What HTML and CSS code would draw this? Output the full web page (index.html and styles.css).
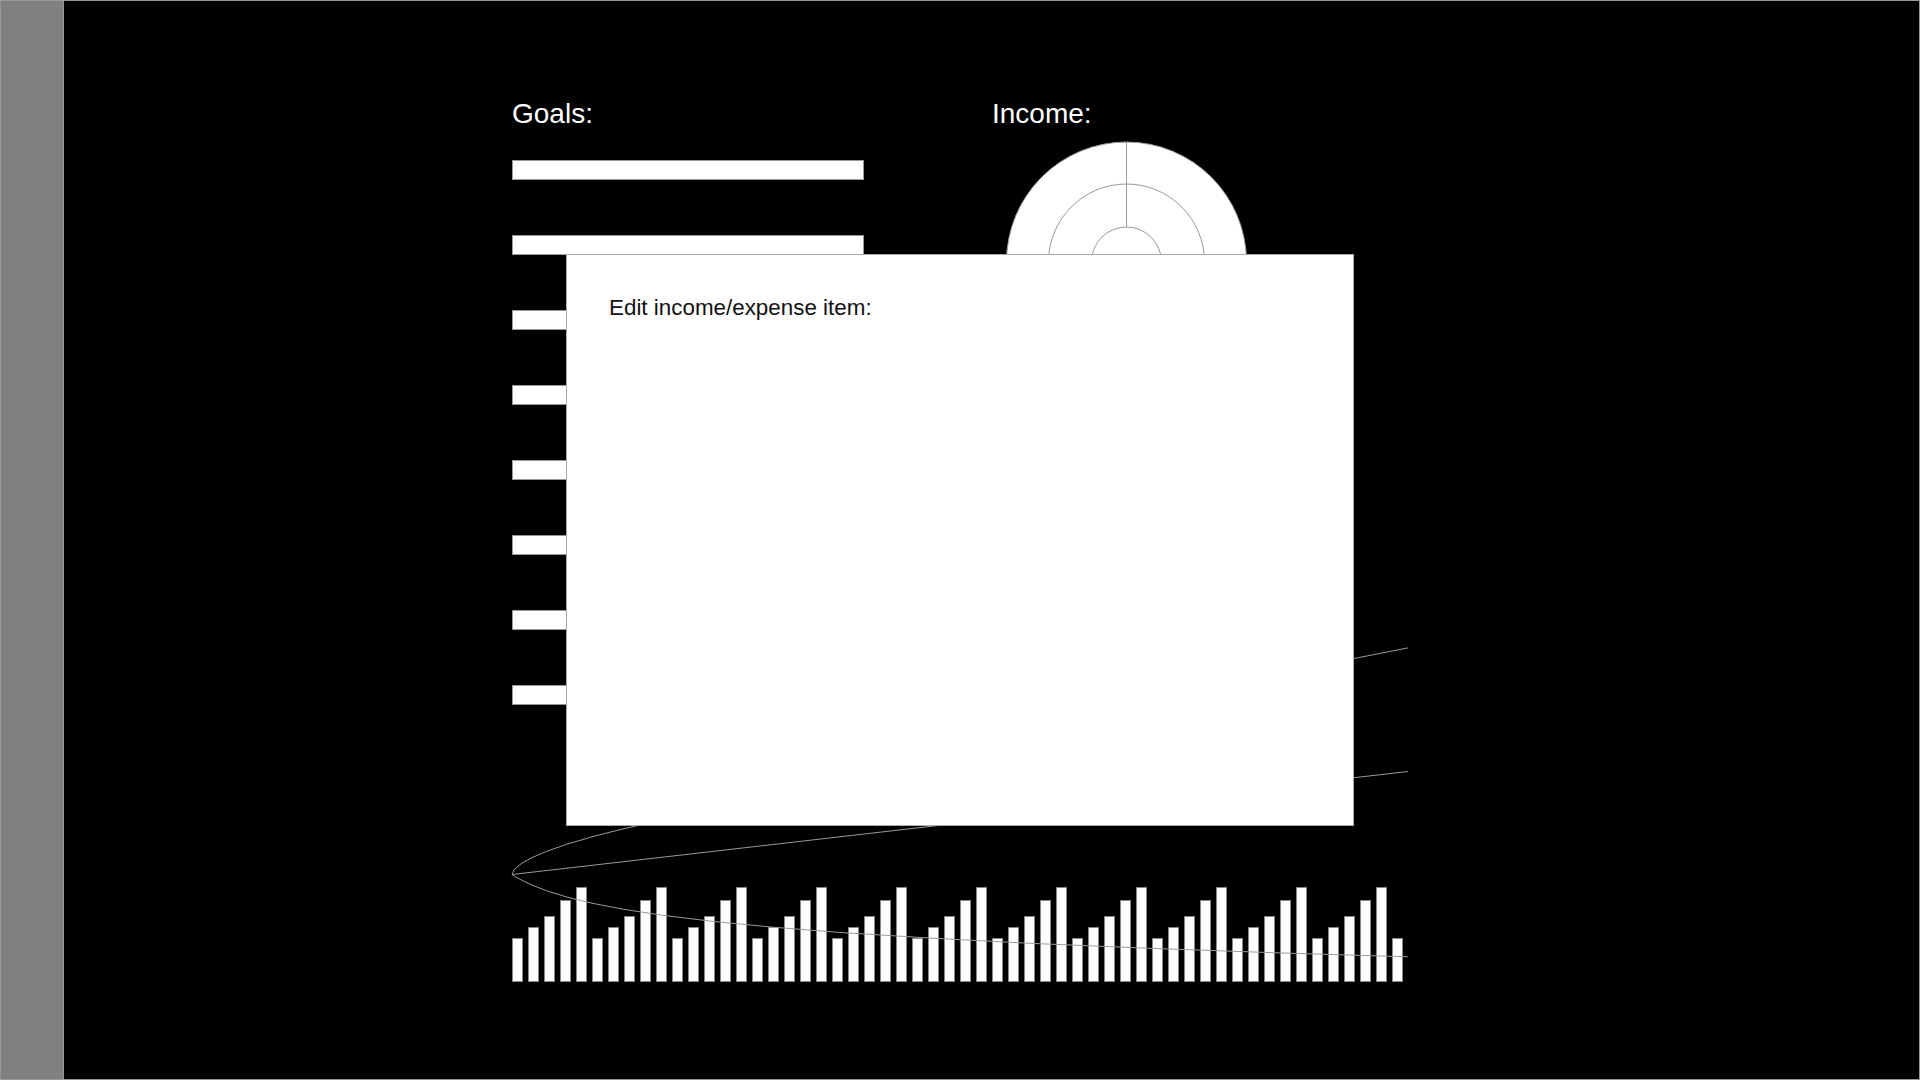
FILE: index.html
```html
<!DOCTYPE html>
<html lang="en">
<head>
<meta charset="utf-8">
<title>Budget</title>
<link rel="stylesheet" href="styles.css">
</head>
<body>
<div class="app">
  <aside class="sidebar"></aside>
  <main class="main">
    <div class="content">
      <div class="top-row">
        <section class="goals">
          <h2 class="section-title">Goals:</h2>
          <ul class="goal-list">
            <li class="goal-bar"></li>
            <li class="goal-bar"></li>
            <li class="goal-bar"></li>
            <li class="goal-bar"></li>
            <li class="goal-bar"></li>
            <li class="goal-bar"></li>
            <li class="goal-bar"></li>
            <li class="goal-bar"></li>
          </ul>
        </section>
        <section class="income">
          <h2 class="section-title">Income:</h2>
          <svg class="income-chart" viewBox="0 0 274 264" width="274" height="264">
            <circle cx="134.5" cy="131" r="120" class="ring"/>
            <circle cx="134.5" cy="131" r="78" class="ring"/>
            <circle cx="134.5" cy="131" r="35" class="ring"/>
            <line x1="134.5" y1="11" x2="134.5" y2="96" class="ring-line"/>
          </svg>
        </section>
      </div>
      <div class="charts">
        <div class="bar-chart">
          <div class="bar" style="height:44px"></div><div class="bar" style="height:55px"></div><div class="bar" style="height:66px"></div><div class="bar" style="height:82px"></div><div class="bar" style="height:95px"></div>
          <div class="bar" style="height:44px"></div><div class="bar" style="height:55px"></div><div class="bar" style="height:66px"></div><div class="bar" style="height:82px"></div><div class="bar" style="height:95px"></div>
          <div class="bar" style="height:44px"></div><div class="bar" style="height:55px"></div><div class="bar" style="height:66px"></div><div class="bar" style="height:82px"></div><div class="bar" style="height:95px"></div>
          <div class="bar" style="height:44px"></div><div class="bar" style="height:55px"></div><div class="bar" style="height:66px"></div><div class="bar" style="height:82px"></div><div class="bar" style="height:95px"></div>
          <div class="bar" style="height:44px"></div><div class="bar" style="height:55px"></div><div class="bar" style="height:66px"></div><div class="bar" style="height:82px"></div><div class="bar" style="height:95px"></div>
          <div class="bar" style="height:44px"></div><div class="bar" style="height:55px"></div><div class="bar" style="height:66px"></div><div class="bar" style="height:82px"></div><div class="bar" style="height:95px"></div>
          <div class="bar" style="height:44px"></div><div class="bar" style="height:55px"></div><div class="bar" style="height:66px"></div><div class="bar" style="height:82px"></div><div class="bar" style="height:95px"></div>
          <div class="bar" style="height:44px"></div><div class="bar" style="height:55px"></div><div class="bar" style="height:66px"></div><div class="bar" style="height:82px"></div><div class="bar" style="height:95px"></div>
          <div class="bar" style="height:44px"></div><div class="bar" style="height:55px"></div><div class="bar" style="height:66px"></div><div class="bar" style="height:82px"></div><div class="bar" style="height:95px"></div>
          <div class="bar" style="height:44px"></div><div class="bar" style="height:55px"></div><div class="bar" style="height:66px"></div><div class="bar" style="height:82px"></div><div class="bar" style="height:95px"></div>
          <div class="bar" style="height:44px"></div><div class="bar" style="height:55px"></div><div class="bar" style="height:66px"></div><div class="bar" style="height:82px"></div><div class="bar" style="height:95px"></div>
          <div class="bar" style="height:44px"></div>
        </div>
        <svg class="line-chart" viewBox="0 0 898 277" width="898" height="277">
          <polyline class="series" points="0,169.5 2,165.05 5,161.93 10,158.2 20,152.6 35,146.2 55,139.2 80,131.8 105,125.4 130,119.6 300,69.5 500,19.5 700,-15.5 842,-46.5 896,-57.1"/>
          <line class="series" x1="0" y1="169.5" x2="896" y2="66.5"/>
          <polyline class="series" points="0,169.5 5,172.57 10,175.32 20,180.08 35,185.9 55,192.1 80,198.2 110,204 150,210.2 200,216.3 260,222.1 330,227.6 420,233.2 520,238.4 640,243.4 770,248 896,251.8"/>
        </svg>
      </div>
    </div>
  </main>
</div>
<div class="modal">
  <h3 class="modal-title">Edit income/expense item:</h3>
</div>
</body>
</html>
```
FILE: styles.css
```css
html, body {
  margin: 0;
  padding: 0;
  background: #000;
}

body {
  font-family: "Liberation Sans", Arial, sans-serif;
  overflow: hidden;
}

.app {
  display: flex;
  height: 100vh;
  box-sizing: border-box;
  border: 1px solid #999;
}

.sidebar {
  width: 62px;
  flex: none;
  background: #808080;
  border-right: 1px solid #9a9a9a;
}

.main {
  flex: 1;
  background: #000;
  padding-top: 97px;
  padding-left: 448px;
}

.content {
  width: 898px;
}

.top-row {
  display: flex;
  gap: 128px;
  align-items: flex-start;
}

.goals {
  width: 352px;
  flex: none;
}

.section-title {
  margin: 0;
  font-size: 28px;
  line-height: 32px;
  font-weight: normal;
  color: #fff;
}

.goal-list {
  list-style: none;
  margin: 30px 0 0;
  padding: 0;
  display: flex;
  flex-direction: column;
  gap: 55px;
}

.goal-bar {
  height: 20px;
  box-sizing: border-box;
  background: #fff;
  border: 1px solid #999;
}

.income-chart {
  display: block;
  margin-top: 1px;
}

.ring {
  fill: #fff;
  stroke: #9a9a9a;
  stroke-width: 1;
}

.ring-line {
  stroke: #9a9a9a;
  stroke-width: 1;
}

.charts {
  display: grid;
  height: 277px;
}

.bar-chart,
.line-chart {
  grid-area: 1 / 1;
}

.bar-chart {
  align-self: end;
  display: flex;
  align-items: flex-end;
  gap: 5px;
  height: 95px;
}

.bar {
  width: 11px;
  flex: none;
  box-sizing: border-box;
  background: #fff;
  border: 1px solid #888;
}

.line-chart {
  display: block;
  overflow: visible;
}

.series {
  fill: none;
  stroke: #9a9a9a;
  stroke-width: 1;
  stroke-linejoin: round;
}

.modal {
  position: fixed;
  left: 50%;
  top: 50%;
  width: 788px;
  height: 572px;
  transform: translate(-50%, -50%);
  box-sizing: border-box;
  background: #fff;
  border: 1px solid #aaa;
  padding: 40px 42px;
}

.modal-title {
  margin: 0;
  font-size: 22.4px;
  line-height: 25px;
  font-weight: normal;
  color: #111;
}
```
